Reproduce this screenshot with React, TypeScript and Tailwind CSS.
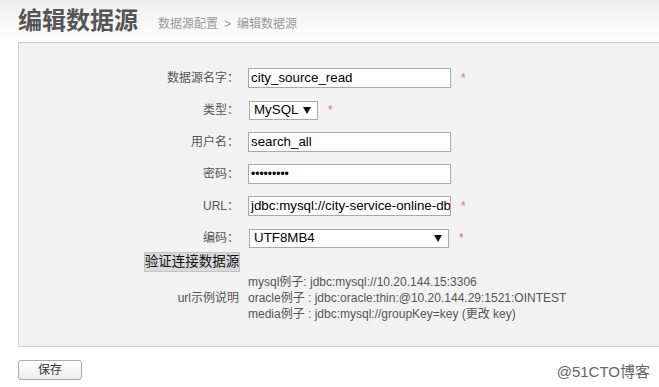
import React from "react";

const cjk = "font-['Liberation_Sans','Noto_Sans_CJK_SC',sans-serif]";

function Label({ children }: { children: React.ReactNode }) {
  return (
    <div className="w-[220px] shrink-0 text-right text-[12px] text-[#555]">{children}</div>
  );
}

function Star() {
  return <span className="ml-[10px] text-[12px] text-[#e0668a]">*</span>;
}

function Tri() {
  return (
    <svg width="8" height="7" viewBox="0 0 8 7" className="shrink-0">
      <path d="M0 0 L8 0 L4 7 Z" fill="#111" />
    </svg>
  );
}

export default function App() {
  return (
    <div className={`relative h-[387px] w-[659px] overflow-hidden bg-white ${cjk}`}>
      <div className="h-[42px] bg-gradient-to-b from-[#efefef] to-white">
        <div className="flex items-end pl-[18px] pt-[6px]">
          <span className="text-[24px] font-bold leading-[30px] text-[#555]">编辑数据源</span>
          <span className="ml-[20px] mb-[3px] flex text-[12px] text-[#999]">
            <span>数据源配置</span>
            <span className="mx-[6px]">&gt;</span>
            <span>编辑数据源</span>
          </span>
        </div>
      </div>
      <div className="ml-[18px] w-[700px] border border-[#cfcfcf] bg-[#f2f2f2] pt-[19px] pb-[24px]">
        <div className="flex h-[32px] items-center">
          <Label>数据源名字：</Label>
          <div className="ml-[9px] flex h-[20px] w-[203px] items-center border border-[#a9a9a9] bg-white pl-[2px] text-[13.333px] text-black">city_source_read</div>
          <Star />
        </div>
        <div className="flex h-[32px] items-center">
          <Label>类型：</Label>
          <div className="ml-[10px] flex h-[19px] w-[69px] items-center justify-between whitespace-nowrap border border-[#a9a9a9] bg-white pl-[4px] pr-[6px] text-[13.333px] text-black">
            <span>MySQL</span>
            <Tri />
          </div>
          <Star />
        </div>
        <div className="flex h-[32px] items-center">
          <Label>用户名：</Label>
          <div className="ml-[9px] flex h-[20px] w-[203px] items-center border border-[#a9a9a9] bg-white pl-[2px] text-[13.333px] text-black">search_all</div>
        </div>
        <div className="flex h-[32px] items-center">
          <Label>密码：</Label>
          <div className="ml-[9px] flex h-[20px] w-[203px] items-center border border-[#a9a9a9] bg-white pl-[2px] text-[12px] leading-none text-black">•••••••••</div>
        </div>
        <div className="flex h-[32px] items-center">
          <Label>URL：</Label>
          <div className="ml-[9px] flex h-[20px] w-[203px] items-center overflow-hidden whitespace-nowrap border border-[#a9a9a9] bg-white pl-[2px] text-[13.333px] text-black">jdbc:mysql://city-service-online-db</div>
          <Star />
        </div>
        <div className="flex h-[32px] items-center">
          <Label>编码：</Label>
          <div className="ml-[10px] flex h-[19px] w-[200px] items-center justify-between border border-[#a9a9a9] bg-white pl-[4px] pr-[6px] text-[13.333px] text-black">
            <span>UTF8MB4</span>
            <Tri />
          </div>
          <Star />
        </div>
        <div className="-mt-[2px] flex h-[20px]">
          <div className="w-[125px] shrink-0" />
          <div className="flex h-[20px] w-[96px] items-center justify-center whitespace-nowrap border border-[#c4c4c4] bg-[#dadada] text-[13.5px] text-[#111]">验证连接数据源</div>
        </div>
        <div className="mt-[2px] flex items-center">
          <Label>url示例说明</Label>
          <div className="ml-[9px] flex flex-col text-[12px] leading-[16px] text-[#555]">
            <span>mysql例子: jdbc:mysql://10.20.144.15:3306</span>
            <span>oracle例子 : jdbc:oracle:thin:@10.20.144.29:1521:OINTEST</span>
            <span>media例子 : jdbc:mysql://groupKey=key (更改 key)</span>
          </div>
        </div>
      </div>
      <div className="mt-[10px] flex items-center justify-between pl-[18px] pr-[9px]">
        <div className="flex h-[20px] w-[64px] items-center justify-center rounded-[3px] border border-[#aaa] bg-gradient-to-b from-white to-[#ededed] text-[12px] text-[#333]">保存</div>
        <span className="mt-[4px] text-[15px] text-[#666]">@51CTO博客</span>
      </div>
    </div>
  );
}
